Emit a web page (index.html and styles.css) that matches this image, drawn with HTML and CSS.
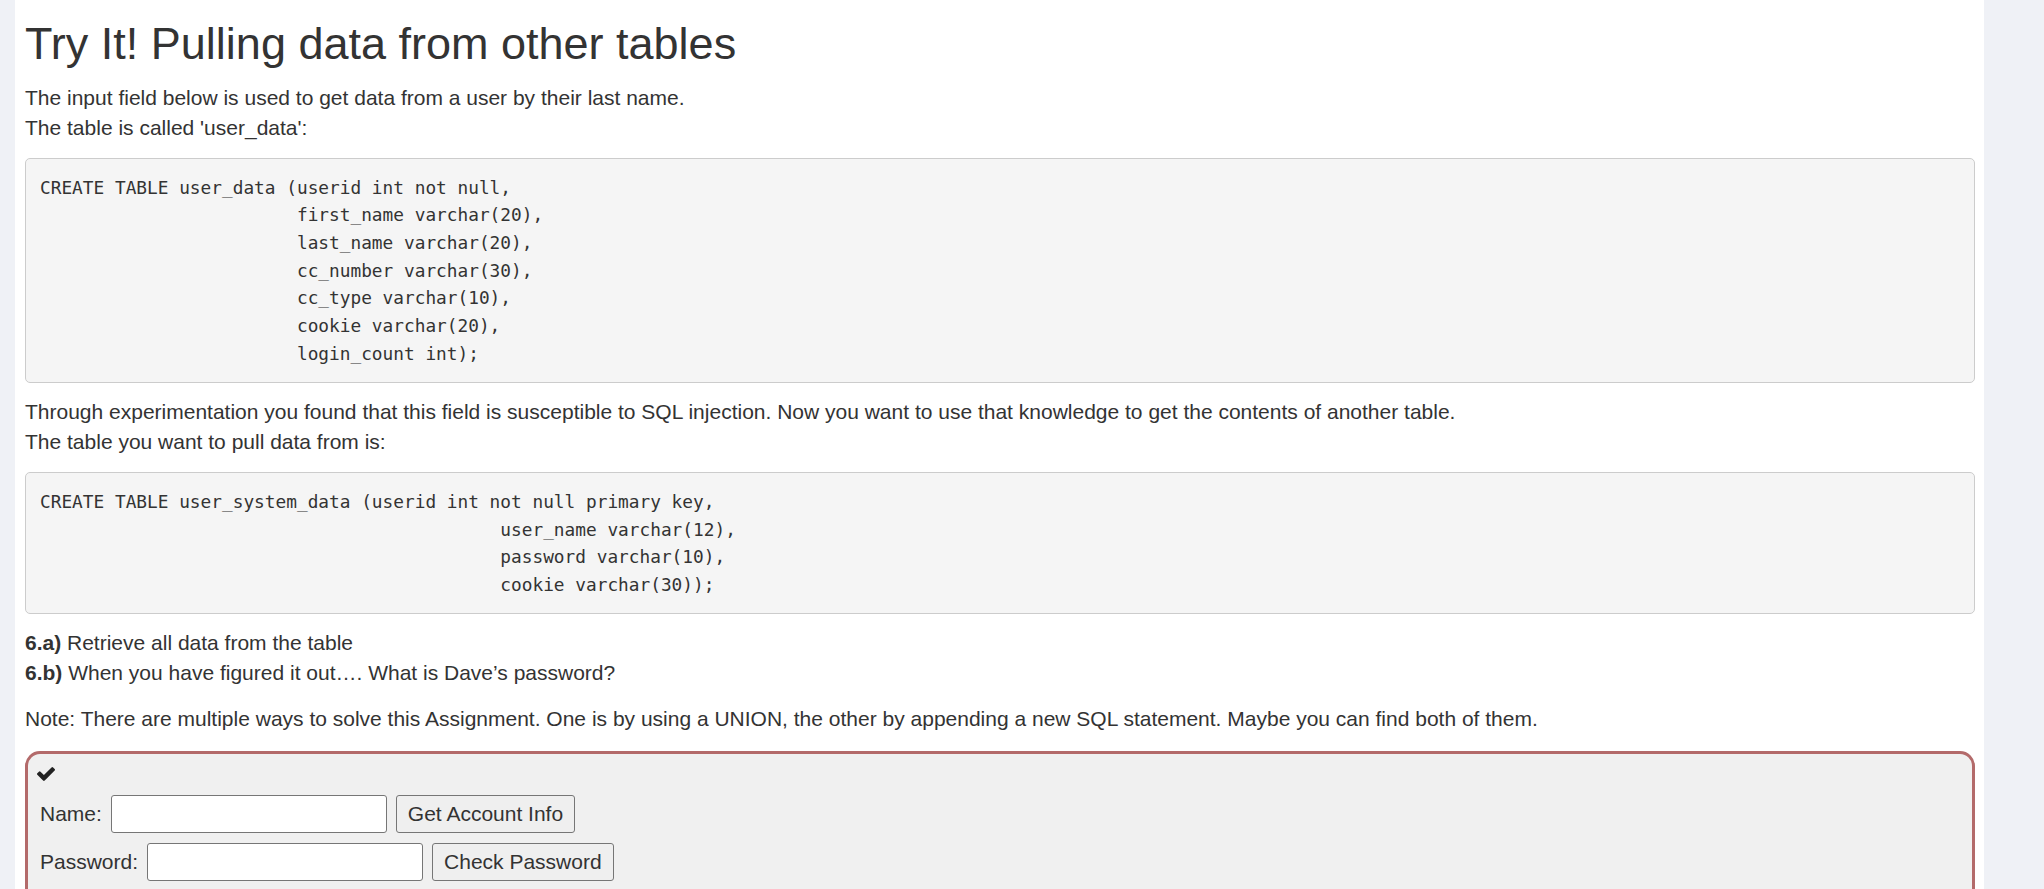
FILE: index.html
```html
<!DOCTYPE html>
<html lang="en">
<head>
<meta charset="utf-8">
<title>Try It! Pulling data from other tables</title>
<link rel="stylesheet" href="styles.css">
</head>
<body>
<div class="page">
<h1 class="title">Try It! Pulling data from other tables</h1>
<p class="text">The input field below is used to get data from a user by their last name.<br>The table is called 'user_data':</p>
<pre class="code">CREATE TABLE user_data (userid int not null,
                        first_name varchar(20),
                        last_name varchar(20),
                        cc_number varchar(30),
                        cc_type varchar(10),
                        cookie varchar(20),
                        login_count int);</pre>
<p class="text">Through experimentation you found that this field is susceptible to SQL injection. Now you want to use that knowledge to get the contents of another table.<br>The table you want to pull data from is:</p>
<pre class="code">CREATE TABLE user_system_data (userid int not null primary key,
                                           user_name varchar(12),
                                           password varchar(10),
                                           cookie varchar(30));</pre>
<p class="text"><b>6.a)</b> Retrieve all data from the table<br><b>6.b)</b> When you have figured it out…. What is Dave’s password?</p>
<p class="text note">Note: There are multiple ways to solve this Assignment. One is by using a UNION, the other by appending a new SQL statement. Maybe you can find both of them.</p>
<div class="attack-box">
  <div class="icon-row">
    <svg class="check" viewBox="121 334 1550 1188" width="18" height="14" aria-hidden="true"><path fill="#222" d="M1671 566q0 40-28 68l-724 724-136 136q-28 28-68 28t-68-28l-136-136-362-362q-28-28-28-68t28-68l136-136q28-28 68-28t68 28l294 295 656-657q28-28 68-28t68 28l136 136q28 28 28 68z"/></svg>
  </div>
  <div class="rows">
    <form class="form-row">
      <label class="label" for="name">Name:</label>
      <input class="field" id="name" type="text">
      <button class="btn" type="button">Get Account Info</button>
    </form>
    <form class="form-row">
      <label class="label" for="pass">Password:</label>
      <input class="field" id="pass" type="text">
      <button class="btn" type="button">Check Password</button>
    </form>
  </div>
</div>
</div>
</body>
</html>
```
FILE: styles.css
```css
html, body {
  margin: 0;
  padding: 0;
}
body {
  background: #eff1f6;
  font-family: "Liberation Sans", Arial, sans-serif;
  font-size: 21px;
  line-height: 30px;
  color: #333;
}
.page {
  margin-left: 15px;
  width: 1969px;
  box-sizing: border-box;
  padding: 19px 9px 0 10px;
  background: #fff;
  min-height: 100vh;
}
.title {
  font-size: 45px;
  line-height: 49.5px;
  font-weight: normal;
  margin: 0 0 14px;
  color: #333;
}
.text {
  margin: 0 0 15.5px;
}
.note {
  margin-bottom: 17px;
}
.code {
  margin: 0 0 14px;
  padding: 14.5px 14px;
  border: 1px solid #ccc;
  border-radius: 5px;
  background: #f5f5f5;
  font-family: "DejaVu Sans Mono", monospace;
  font-size: 17.8px;
  line-height: 27.7px;
  color: #333;
  white-space: pre;
}
.attack-box {
  border: 3px solid #b36a6a;
  border-radius: 15px;
  background: #f0f0f0;
  padding: 12px 12px 60px;
}
.icon-row {
  height: 16px;
  display: flex;
  align-items: center;
}
.check {
  display: block;
  margin-left: -3px;
}
.rows {
  margin-top: 13px;
  display: flex;
  flex-direction: column;
  gap: 10px;
}
.form-row {
  display: flex;
  align-items: center;
  gap: 9px;
  height: 38px;
  margin: 0;
}
.label {
  font-size: 21px;
  color: #333;
}
.field {
  width: 276px;
  height: 38px;
  box-sizing: border-box;
  border: 1px solid #767676;
  border-radius: 3px;
  background: #fff;
  margin: 0;
  padding: 2px 6px;
  font-family: "Liberation Sans", Arial, sans-serif;
  font-size: 21px;
}
.btn {
  height: 38px;
  box-sizing: border-box;
  padding: 0 11px;
  border: 1px solid #767676;
  border-radius: 3px;
  background: #efefef;
  color: #333;
  margin: 0;
  font-family: "Liberation Sans", Arial, sans-serif;
  font-size: 21px;
}
```
